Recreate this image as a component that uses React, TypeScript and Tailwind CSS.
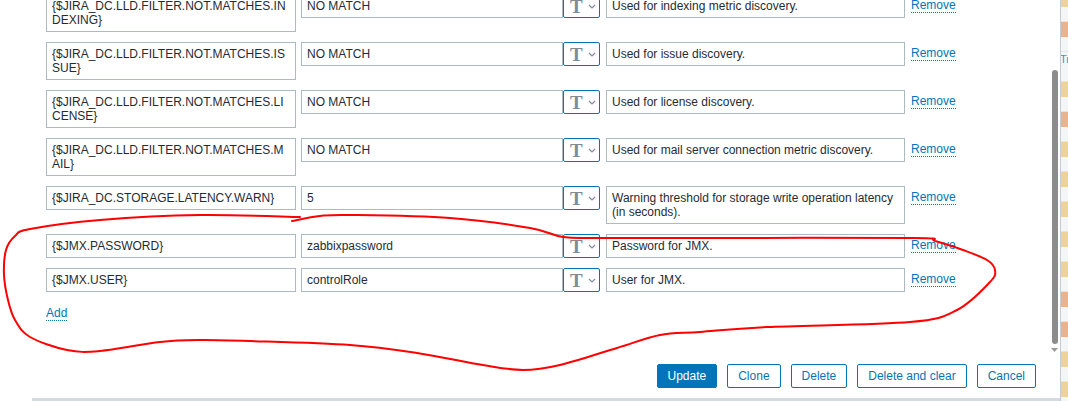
import React from 'react';

type Row = { macro: string[]; value: string; desc: string[] };

const rows: Row[] = [
  { macro: ['{$JIRA_DC.LLD.FILTER.NOT.MATCHES.IN', 'DEXING}'], value: 'NO MATCH', desc: ['Used for indexing metric discovery.'] },
  { macro: ['{$JIRA_DC.LLD.FILTER.NOT.MATCHES.IS', 'SUE}'], value: 'NO MATCH', desc: ['Used for issue discovery.'] },
  { macro: ['{$JIRA_DC.LLD.FILTER.NOT.MATCHES.LI', 'CENSE}'], value: 'NO MATCH', desc: ['Used for license discovery.'] },
  { macro: ['{$JIRA_DC.LLD.FILTER.NOT.MATCHES.M', 'AIL}'], value: 'NO MATCH', desc: ['Used for mail server connection metric discovery.'] },
  {
    macro: ['{$JIRA_DC.STORAGE.LATENCY.WARN}'],
    value: '5',
    desc: ['Warning threshold for storage write operation latency', '(in seconds).'],
  },
  { macro: ['{$JMX.PASSWORD}'], value: 'zabbixpassword', desc: ['Password for JMX.'] },
  { macro: ['{$JMX.USER}'], value: 'controlRole', desc: ['User for JMX.'] },
];

// background table cells peeking out at the right edge
const sideCells = ['y', 'o', 't', 'y', 'o', 'y', 'y', 'y', 'y', 'y', 'o', 'o', 'y', 'y'];

// hand-drawn red loop
const loop = [
  [292, 221], [320, 216], [350, 215], [450, 218], [530, 228], [563, 237], [600, 238], [710, 238],
  [913, 238], [935, 241], [963, 250], [987, 260], [995, 270], [990, 282], [957, 310], [910, 322],
  [767, 327], [700, 332], [660, 335], [617, 348], [560, 365], [523, 370], [483, 365], [417, 353],
  [350, 345], [250, 341], [200, 340], [160, 342], [100, 351], [67, 350], [30, 337], [15, 320],
  [8, 300], [4, 275], [6, 250], [15, 236], [30, 229], [100, 220], [200, 215], [300, 217],
];

function smoothPath(pts: number[][]) {
  let d = `M ${pts[0][0]} ${pts[0][1]}`;
  for (let i = 0; i < pts.length - 1; i++) {
    const p0 = pts[i - 1] || pts[i];
    const p1 = pts[i];
    const p2 = pts[i + 1];
    const p3 = pts[i + 2] || p2;
    const c1x = p1[0] + (p2[0] - p0[0]) / 6;
    const c1y = p1[1] + (p2[1] - p0[1]) / 6;
    const c2x = p2[0] - (p3[0] - p1[0]) / 6;
    const c2y = p2[1] - (p3[1] - p1[1]) / 6;
    d += ` C ${c1x} ${c1y} ${c2x} ${c2y} ${p2[0]} ${p2[1]}`;
  }
  return d;
}

function TypeToggle() {
  return (
    <div className="w-[37px] h-[24px] border border-[#0275b8] rounded-[2px] bg-white flex items-center pl-[6px] gap-[5px] shrink-0">
      <span className="font-['Liberation_Serif',serif] font-bold text-[19px] leading-none text-[#7b8e99]">T</span>
      <svg width="8" height="5" viewBox="0 0 8 5" fill="none">
        <path d="M1 1l3 3 3-3" stroke="#7b8e99" strokeWidth="1.2" />
      </svg>
    </div>
  );
}

export default function App() {
  return (
    <div className="w-[1068px] h-[401px] relative flex overflow-hidden bg-white font-['Liberation_Sans',Arial,sans-serif] text-[12px] leading-[14px] text-[#1f2c33]">
      <div className="w-[1060px] flex flex-col">
        <div className="h-[398px] flex flex-col">
          {/* Macros list + scrollbar */}
          <div className="h-[364px] flex">
            <div className="w-[1051px] pl-[46px] overflow-hidden">
              <div className="-mt-[6px] flex flex-col gap-[10px]">
                {rows.map((row, i) => (
                  <div key={i} className="flex items-start">
                    <div className="w-[250px] border border-[#acbbc2] px-[5px] py-[4px] bg-white">
                      {row.macro.map((line, j) => (
                        <div key={j}>{line}</div>
                      ))}
                    </div>
                    <div className="ml-[5px] flex">
                      <div className="w-[262px] h-[24px] border border-[#acbbc2] px-[5px] flex items-center">{row.value}</div>
                      <TypeToggle />
                    </div>
                    <div className="ml-[6px] w-[299px] border border-[#acbbc2] px-[5px] py-[4px]">
                      {row.desc.map((line, j) => (
                        <div key={j}>{line}</div>
                      ))}
                    </div>
                    <div className="ml-[6px] pt-[4px]">
                      <span className="text-[#0275b8] border-b border-dotted border-[#0275b8]">Remove</span>
                    </div>
                  </div>
                ))}
              </div>
              <div className="mt-[14px]">
                <span className="text-[#0275b8] border-b border-dotted border-[#0275b8]">Add</span>
              </div>
            </div>
            <div className="w-[7px] flex flex-col items-center">
              <div className="mt-[70px] w-[6px] h-[274px] rounded-full bg-[#8c8c8c]" />
              <svg className="mt-[4px]" width="7" height="4" viewBox="0 0 7 4">
                <path d="M0 0h7L3.5 4z" fill="#9a9a9a" />
              </svg>
            </div>
          </div>

          {/* Footer */}
          <div className="flex justify-end gap-[10px] pr-[24px]">
            <button className="h-[24px] px-[10px] border border-[#0275b8] rounded-[2px] bg-[#0275b8] text-white">Update</button>
            <button className="h-[24px] px-[10px] border border-[#0275b8] rounded-[2px] bg-white text-[#0275b8]">Clone</button>
            <button className="h-[24px] px-[10px] border border-[#0275b8] rounded-[2px] bg-white text-[#0275b8]">Delete</button>
            <button className="h-[24px] px-[10px] border border-[#0275b8] rounded-[2px] bg-white text-[#0275b8]">Delete and clear</button>
            <button className="h-[24px] px-[10px] border border-[#0275b8] rounded-[2px] bg-white text-[#0275b8]">Cancel</button>
          </div>
        </div>
        <div className="h-[3px] ml-[32px] bg-[#d4dbdf]" />
      </div>

      {/* Page behind the dialog */}
      <div className="w-[8px] border-l border-[#c4ccd1] bg-[#f4f5f6] overflow-hidden">
        <div className="-mt-[8px] flex flex-col">
          {sideCells.map((c, i) => (
            <div key={i} className="h-[30px] border-b border-[#e3e6e8]">
              {c === 't' ? (
                <div className="h-[15px] text-[11px] text-[#4a90c2] leading-[15px] -ml-[1px]">Tr</div>
              ) : (
                <div className={c === 'o' ? 'h-[15px] bg-[#e8b38e]' : 'h-[15px] bg-[#eed29b]'} />
              )}
            </div>
          ))}
        </div>
      </div>

      <svg className="absolute inset-0 pointer-events-none" width="1068" height="401" viewBox="0 0 1068 401">
        <path d={smoothPath(loop)} fill="none" stroke="#ff0000" strokeWidth="2" strokeLinecap="round" strokeLinejoin="round" />
      </svg>
    </div>
  );
}
